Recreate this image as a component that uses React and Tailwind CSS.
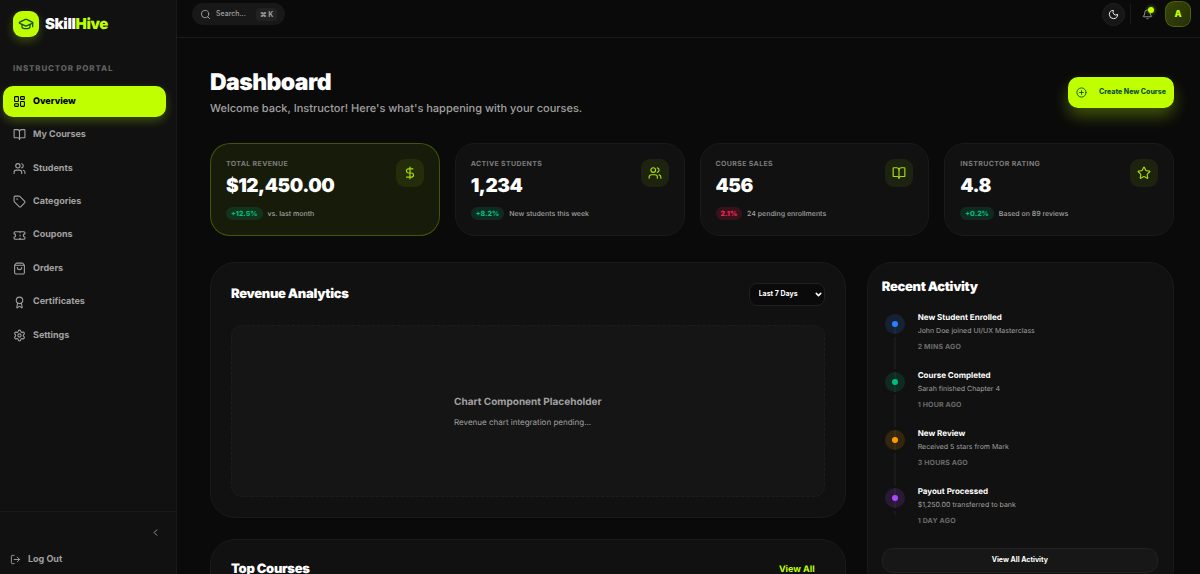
import React, { useState } from 'react';
import {
  Award,
  Bell,
  BookOpen,
  ChevronDown,
  ChevronLeft,
  CirclePlus,
  DollarSign,
  GraduationCap,
  LayoutDashboard,
  LogOut,
  Moon,
  Search,
  Settings,
  ShoppingBag,
  Star,
  Tag,
  Ticket,
  Users,
} from 'lucide-react';
import clsx from 'clsx';

const navItems = [
  { label: 'Overview', icon: LayoutDashboard },
  { label: 'My Courses', icon: BookOpen },
  { label: 'Students', icon: Users },
  { label: 'Categories', icon: Tag },
  { label: 'Coupons', icon: Ticket },
  { label: 'Orders', icon: ShoppingBag },
  { label: 'Certificates', icon: Award },
  { label: 'Settings', icon: Settings },
];

const stats = [
  { label: 'Total Revenue', value: '$12,450.00', change: '+12.5%', up: true, note: 'vs. last month', icon: DollarSign, featured: true },
  { label: 'Active Students', value: '1,234', change: '+8.2%', up: true, note: 'New students this week', icon: Users },
  { label: 'Course Sales', value: '456', change: '2.1%', up: false, note: '24 pending enrollments', icon: BookOpen },
  { label: 'Instructor Rating', value: '4.8', change: '+0.2%', up: true, note: 'Based on 89 reviews', icon: Star },
];

const activities = [
  { title: 'New Student Enrolled', text: 'John Doe joined UI/UX Masterclass', time: '2 mins ago', dot: 'bg-blue-500', halo: 'bg-blue-500/15' },
  { title: 'Course Completed', text: 'Sarah finished Chapter 4', time: '1 hour ago', dot: 'bg-emerald-500', halo: 'bg-emerald-500/15' },
  { title: 'New Review', text: 'Received 5 stars from Mark', time: '3 hours ago', dot: 'bg-amber-500', halo: 'bg-amber-500/15' },
  { title: 'Payout Processed', text: '$1,250.00 transferred to bank', time: '1 day ago', dot: 'bg-purple-500', halo: 'bg-purple-500/15' },
];

function Sidebar() {
  const [active, setActive] = useState('Overview');

  return (
    <aside className="flex w-[177px] shrink-0 flex-col border-r border-[#1a1a1a] bg-[#111111]">
      <div className="flex items-center gap-[6px] px-[13px] pt-[11px]">
        <div className="flex size-[26px] items-center justify-center rounded-[9px] bg-[#bfff00] shadow-[0_4px_10px_rgba(191,255,0,0.25)]">
          <GraduationCap className="size-4 text-green-900" />
        </div>
        <span className="text-[15px] font-black tracking-tight text-white">
          Skill<span className="text-[#bfff00]">Hive</span>
        </span>
      </div>

      <p className="mt-[25px] px-[13px] text-[8px] leading-[12px] font-extrabold tracking-widest text-[#606060] uppercase">
        Instructor Portal
      </p>

      <nav className="mt-3 flex h-[265px] flex-col justify-between pr-[10px] pl-[3px]">
        {navItems.map(({ label, icon: Icon }) => (
          <a
            key={label}
            href="#"
            onClick={() => setActive(label)}
            className={clsx(
              'flex h-[31px] items-center gap-[7px] rounded-[10px] px-[10px] text-[9px]',
              active === label
                ? 'bg-[#bfff00] font-extrabold text-black shadow-[0_4px_10px_rgba(191,255,0,0.25)]'
                : 'font-bold text-[#a1a1a1]'
            )}
          >
            <Icon className="size-[13px]" />
            {label}
          </a>
        ))}
      </nav>

      <div className="mt-auto border-t border-[#1a1a1a] px-[10px] pt-[15px] pb-2">
        <div className="flex justify-end pr-[5px]">
          <button aria-label="Collapse sidebar" className="text-[#a1a1a1]">
            <ChevronLeft className="size-[11px]" />
          </button>
        </div>
        <button className="mt-[14px] flex items-center gap-[7px] text-[9px] leading-[14px] font-bold text-[#a1a1a1]">
          <LogOut className="size-[11px]" />
          Log Out
        </button>
      </div>
    </aside>
  );
}

function Header() {
  return (
    <header className="flex h-[38px] shrink-0 items-center justify-between border-b border-[#1a1a1a] pr-[9px] pb-[9px] pl-[15px]">
      <button className="flex h-[22px] items-center rounded-full bg-[#181818] px-2 text-[7px] font-medium text-[#a1a1a1]">
        <Search className="size-[11px]" />
        <span className="ml-[5px]">Search...</span>
        <kbd className="ml-[10px] rounded-[4px] bg-[#222222] px-1 font-[Inter] text-[7px] leading-[13px] font-bold">
          ⌘ K
        </kbd>
      </button>

      <div className="flex items-center">
        <button
          aria-label="Toggle theme"
          className="flex size-[23px] items-center justify-center rounded-full border border-[#202020] bg-[#161616] text-white"
        >
          <Moon className="size-[11px]" />
        </button>
        <div className="ml-[5px] h-5 w-px bg-[#1a1a1a]" />
        <button aria-label="Notifications" className="relative ml-[11px] text-[#a1a1a1]">
          <Bell className="size-[11px]" />
          <span className="absolute -top-[2px] -right-px size-[6px] rounded-full bg-[#bfff00] shadow-[0_0_4px_rgba(191,255,0,0.6)]" />
        </button>
        <button className="ml-3 flex size-[26px] items-center justify-center rounded-[9px] border border-[#bfff00]/20 bg-linear-to-br from-[#bfff00]/25 to-[#bfff00]/15 text-[9px] font-black text-[#bfff00]">
          A
        </button>
      </div>
    </header>
  );
}

function StatCard({ label, value, change, up, note, icon: Icon, featured }) {
  return (
    <div
      className={clsx(
        'flex items-start justify-between rounded-[20px] border p-[15px]',
        featured ? 'border-[#bfff00]/25 bg-[#171b0a]' : 'border-[#1a1a1a] bg-[#111111]'
      )}
    >
      <div>
        <p className="text-[7px] leading-[10px] font-bold tracking-wider text-[#7c7c7c] uppercase">{label}</p>
        <p className="mt-[5px] text-[19px] leading-6 font-black tracking-tight text-white">{value}</p>
        <div className="mt-[9px] flex items-center gap-[5px]">
          <span
            className={clsx(
              'rounded-full px-[5px] text-[7px] leading-[13px] font-extrabold',
              up ? 'bg-emerald-500/15 text-emerald-500' : 'bg-rose-500/15 text-rose-500'
            )}
          >
            {change}
          </span>
          <span className="text-[7px] leading-[13px] font-medium text-[#a1a1a1]">{note}</span>
        </div>
      </div>
      <div className="flex size-7 items-center justify-center rounded-[9px] bg-[#bfff00]/8 text-[#a6dd0a]">
        <Icon className="size-[14px]" />
      </div>
    </div>
  );
}

function RevenuePanel() {
  return (
    <section className="rounded-[25px] border border-[#1a1a1a] bg-[#111111] p-5">
      <div className="flex items-center justify-between">
        <h2 className="text-[13px] font-black tracking-tight text-white">Revenue Analytics</h2>
        <div className="relative flex">
          <select
            aria-label="Date range"
            className="h-[23px] w-[76px] appearance-none rounded-[8px] border border-[#202020] bg-[#0a0a0a] pl-[9px] text-[7px] font-bold text-white"
          >
            <option>Last 7 Days</option>
            <option>Last 30 Days</option>
            <option>Last Year</option>
          </select>
          <ChevronDown strokeWidth={4} className="pointer-events-none absolute top-[7px] right-[2px] size-[9px] text-white" />
        </div>
      </div>
      <div className="mt-[19px] flex h-[172px] flex-col items-center justify-center rounded-[11px] border border-dashed border-[#1d1d1d] bg-[#151515] text-[#a1a1a1]">
        <div>
          <p className="text-[10px] leading-4 font-bold">Chart Component Placeholder</p>
          <p className="mt-[5px] text-[8px] leading-[14px]">Revenue chart integration pending...</p>
        </div>
      </div>
    </section>
  );
}

function ActivityPanel() {
  return (
    <section className="rounded-[25px] border border-[#1a1a1a] bg-[#111111] pt-[15px] pr-[15px] pb-5 pl-[14px]">
      <h2 className="text-[13px] leading-[18px] font-black tracking-tight text-white">Recent Activity</h2>
      <div className="relative mt-[15px]">
        <div className="absolute top-4 bottom-[11px] left-[12px] w-[2px] bg-[#1a1a1a]" />
        <ul className="flex flex-col gap-[17px]">
          {activities.map((item) => (
            <li key={item.title} className="relative flex gap-[13px] pl-[3px]">
              <div className={clsx('mt-[3px] flex size-5 items-center justify-center rounded-full ring-3 ring-[#111111]', item.halo)}>
                <span className={clsx('size-[6px] rounded-full', item.dot)} />
              </div>
              <div>
                <p className="text-[8px] leading-[13px] font-bold text-white">{item.title}</p>
                <p className="text-[7px] leading-[13px] text-[#a1a1a1]">{item.text}</p>
                <p className="mt-[5px] text-[7px] leading-[10px] font-bold tracking-wide text-[#6c6c6c] uppercase">{item.time}</p>
              </div>
            </li>
          ))}
        </ul>
      </div>
      <button className="mt-[22px] h-[25px] w-full rounded-[11px] border border-[#222222] bg-[#171717] text-[7px] font-bold text-white">
        View All Activity
      </button>
    </section>
  );
}

export default function App() {
  return (
    <div className="flex h-screen overflow-hidden bg-[#0a0a0a] font-[Inter,sans-serif] antialiased [text-rendering:geometricPrecision]">
      <Sidebar />
      <div className="flex min-w-0 flex-1 flex-col">
        <Header />
        <main className="flex-1 overflow-y-auto pt-[30px] pr-[26px] pb-8 pl-[33px] [scrollbar-width:none]">
          <div className="flex items-center justify-between">
            <div>
              <h1 className="text-[23px] leading-7 font-black tracking-tight text-white">Dashboard</h1>
              <p className="mt-1 text-[11px] leading-4 font-medium text-[#a1a1a1]">
                Welcome back, Instructor! Here's what's happening with your courses.
              </p>
            </div>
            <button className="flex h-[31px] items-center gap-3 rounded-[10px] bg-[#bfff00] px-2 text-[7px] font-extrabold text-green-900 shadow-[0_8px_16px_rgba(191,255,0,0.3)]">
              <CirclePlus className="size-[11px]" />
              Create New Course
            </button>
          </div>

          <div className="mt-[27px] grid grid-cols-4 gap-[15px]">
            {stats.map((stat) => (
              <StatCard key={stat.label} {...stat} />
            ))}
          </div>

          <div className="mt-[26px] grid grid-cols-3 items-start gap-[21px]">
            <div className="col-span-2 flex flex-col gap-[21px]">
              <RevenuePanel />
              <section className="rounded-[25px] border border-[#1a1a1a] bg-[#111111] p-5">
                <div className="flex items-center justify-between">
                  <h2 className="text-[13px] font-black tracking-tight text-white">Top Courses</h2>
                  <a href="#" className="pr-[10px] text-[9px] font-bold text-[#bfff00]">
                    View All
                  </a>
                </div>
              </section>
            </div>
            <ActivityPanel />
          </div>
        </main>
      </div>
    </div>
  );
}
